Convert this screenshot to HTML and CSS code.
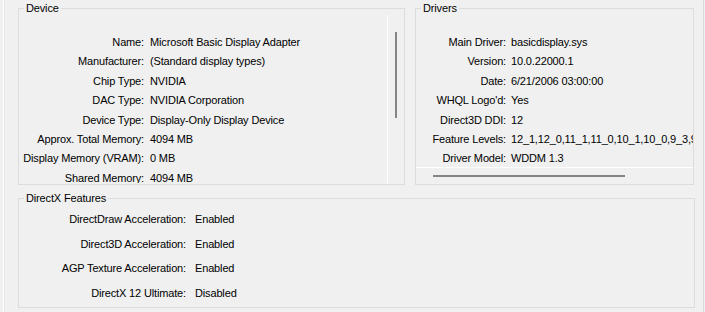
FILE: index.html
```html
<!DOCTYPE html>
<html>
<head>
<meta charset="utf-8">
<title>Display</title>
<link rel="stylesheet" href="styles.css">
</head>
<body>
<div class="page">
  <div class="top-row">
    <section class="group device">
      <div class="legend">Device</div>
      <div class="group-body">
        <div class="panel device-panel">
          <dl class="props device-props">
            <dt>Name:</dt><dd>Microsoft Basic Display Adapter</dd>
            <dt>Manufacturer:</dt><dd>(Standard display types)</dd>
            <dt>Chip Type:</dt><dd>NVIDIA</dd>
            <dt>DAC Type:</dt><dd>NVIDIA Corporation</dd>
            <dt>Device Type:</dt><dd>Display-Only Display Device</dd>
            <dt>Approx. Total Memory:</dt><dd>4094 MB</dd>
            <dt>Display Memory (VRAM):</dt><dd>0 MB</dd>
            <dt>Shared Memory:</dt><dd>4094 MB</dd>
          </dl>
        </div>
        <div class="vscroll"><div class="vthumb"></div></div>
      </div>
    </section>
    <section class="group drivers">
      <div class="legend">Drivers</div>
      <div class="panel drivers-panel">
        <dl class="props drivers-props">
          <dt>Main Driver:</dt><dd>basicdisplay.sys</dd>
          <dt>Version:</dt><dd>10.0.22000.1</dd>
          <dt>Date:</dt><dd>6/21/2006 03:00:00</dd>
          <dt>WHQL Logo'd:</dt><dd>Yes</dd>
          <dt>Direct3D DDI:</dt><dd>12</dd>
          <dt>Feature Levels:</dt><dd>12_1,12_0,11_1,11_0,10_1,10_0,9_3,9_2,9_1</dd>
          <dt>Driver Model:</dt><dd>WDDM 1.3</dd>
        </dl>
      </div>
      <div class="hscroll"><div class="hthumb"></div></div>
    </section>
  </div>
  <section class="group features">
    <div class="legend">DirectX Features</div>
    <dl class="props features-props">
      <dt>DirectDraw Acceleration:</dt><dd>Enabled</dd>
      <dt>Direct3D Acceleration:</dt><dd>Enabled</dd>
      <dt>AGP Texture Acceleration:</dt><dd>Enabled</dd>
      <dt>DirectX 12 Ultimate:</dt><dd>Disabled</dd>
    </dl>
  </section>
</div>
</body>
</html>
```
FILE: styles.css
```css
* { box-sizing: border-box; }
html, body { margin: 0; padding: 0; }
body {
  background: #f0f0f0;
  color: #000;
  font-family: "Liberation Sans", Arial, sans-serif;
  font-size: 11px;
  letter-spacing: -0.15px;
  width: 705px;
  height: 312px;
  overflow: hidden;
}
.page {
  margin-left: 3px;
  width: 701px;
  height: 312px;
  border-left: 1px solid #ffffff;
  border-right: 1px solid #dadada;
  box-shadow: inset 1px 0 0 #e6e6e6;
  padding: 8px 0 0 14px;
}
.top-row {
  display: flex;
  gap: 10px;
}
.group {
  border: 1px solid #dcdcdc;
}
.legend {
  width: max-content;
  margin: -9px 0 0 5px;
  padding: 0 2px;
  height: 16px;
  line-height: 16px;
  background: #f0f0f0;
  white-space: nowrap;
}
.device {
  width: 387px;
  height: 177px;
}
.group-body {
  display: flex;
  margin-top: -1px;
}
.panel {
  overflow: hidden;
  white-space: nowrap;
}
.device-panel {
  width: 369px;
  height: 168px;
  border-right: 1px solid #ffffff;
}
.vscroll {
  width: 16px;
  padding: 17px 0 0 7px;
}
.vthumb {
  width: 2px;
  height: 86px;
  background: #858585;
}
.props {
  margin: 0;
  display: grid;
  align-items: center;
}
.props dt {
  text-align: right;
}
.props dd {
  margin: 0;
  white-space: nowrap;
}
.device-props {
  padding-top: 18px;
  grid-template-columns: 125px auto;
  column-gap: 6px;
  grid-auto-rows: 19.4px;
  line-height: 19.4px;
}
.drivers {
  width: 279px;
  height: 177px;
  display: flex;
  flex-direction: column;
}
.drivers-panel {
  margin-top: -1px;
  width: 277px;
  height: 153px;
  border-bottom: 1px solid #ffffff;
}
.drivers-props {
  padding-top: 18px;
  grid-template-columns: 90px auto;
  column-gap: 5px;
  grid-auto-rows: 19.4px;
  line-height: 19.4px;
}
.hscroll {
  height: 16px;
  padding: 7px 0 0 17px;
}
.hthumb {
  width: 192px;
  height: 2px;
  background: #858585;
}
.features {
  margin-top: 13px;
  width: 677px;
  height: 110px;
}
.features-props {
  padding-top: 1px;
  grid-template-columns: 167px auto;
  column-gap: 9px;
  grid-auto-rows: 24.6px;
  line-height: 24.6px;
}
```
